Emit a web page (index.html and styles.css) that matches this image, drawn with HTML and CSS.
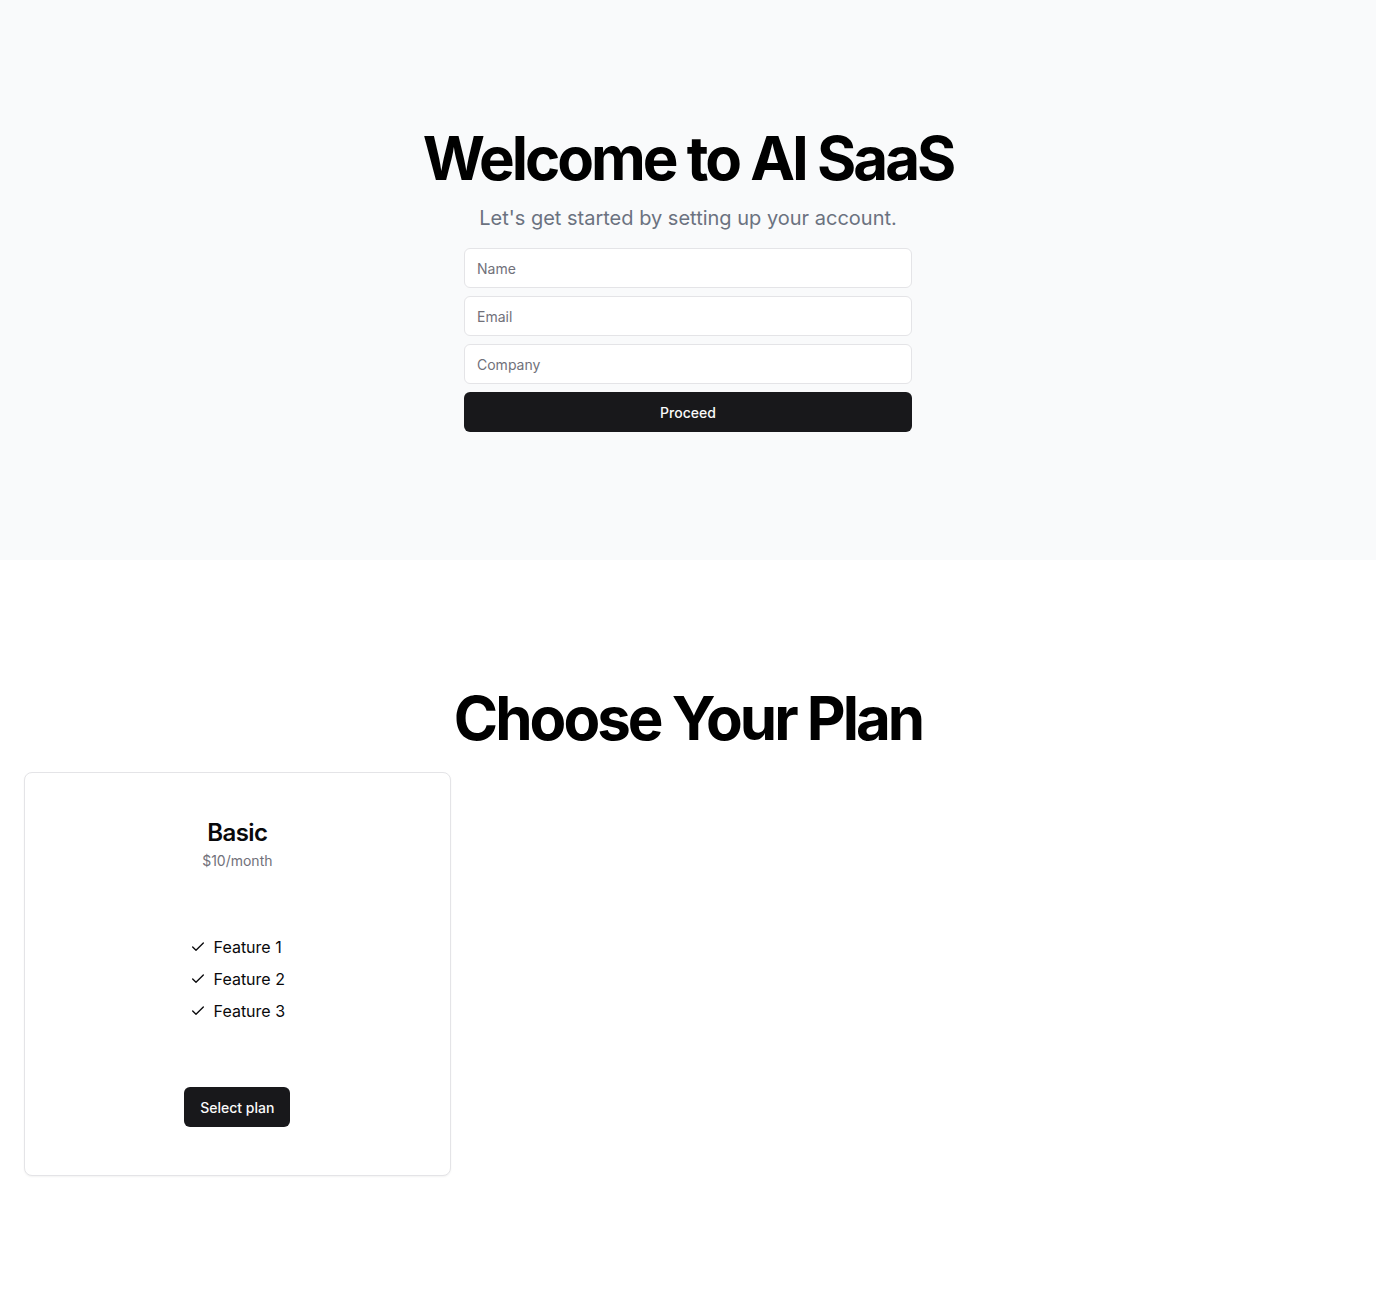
FILE: index.html
```html
<!DOCTYPE html>
<html lang="en">
<head>
<meta charset="utf-8">
<title>AI SaaS</title>
<link rel="stylesheet" href="styles.css">
</head>
<body>
<section class="hero">
  <div class="hero-inner">
    <h1 class="title">Welcome to AI SaaS</h1>
    <p class="subtitle">Let's get started by setting up your account.</p>
    <form class="form">
      <input class="input" type="text" placeholder="Name">
      <input class="input" type="email" placeholder="Email">
      <input class="input" type="text" placeholder="Company">
      <button class="btn btn-full" type="button">Proceed</button>
    </form>
  </div>
</section>
<section class="plans">
  <h2 class="title">Choose Your Plan</h2>
  <div class="grid">
    <div class="card">
      <div class="card-header">
        <h3 class="card-title">Basic</h3>
        <p class="card-desc">$10/month</p>
      </div>
      <div class="card-content">
        <ul class="features">
          <li class="feature"><svg class="check" viewBox="0 0 24 24" fill="none" stroke="currentColor" stroke-width="2" stroke-linecap="round" stroke-linejoin="round"><path d="M20 6 9 17l-5-5"/></svg>Feature 1</li>
          <li class="feature"><svg class="check" viewBox="0 0 24 24" fill="none" stroke="currentColor" stroke-width="2" stroke-linecap="round" stroke-linejoin="round"><path d="M20 6 9 17l-5-5"/></svg>Feature 2</li>
          <li class="feature"><svg class="check" viewBox="0 0 24 24" fill="none" stroke="currentColor" stroke-width="2" stroke-linecap="round" stroke-linejoin="round"><path d="M20 6 9 17l-5-5"/></svg>Feature 3</li>
        </ul>
      </div>
      <div class="card-footer">
        <button class="btn" type="button">Select plan</button>
      </div>
    </div>
  </div>
</section>
</body>
</html>
```

FILE: styles.css
```css
* { box-sizing: border-box; }
html, body { margin: 0; padding: 0; }
body {
  font-family: Inter, "Noto Sans", sans-serif;
  color: #09090b;
  background: #ffffff;
}
.hero {
  background: #f9fafb;
  padding: 128px 24px;
}
.hero-inner {
  display: flex;
  flex-direction: column;
  align-items: center;
  text-align: center;
}
.title {
  margin: 0;
  font-size: 60px;
  line-height: 60px;
  font-weight: 700;
  letter-spacing: -0.05em;
  color: #000;
  text-align: center;
}
.subtitle {
  margin: 16px 0 0;
  font-size: 20px;
  line-height: 28px;
  color: #6b7280;
}
.form {
  margin-top: 16px;
  width: 448px;
  display: flex;
  flex-direction: column;
  gap: 8px;
}
.input {
  height: 40px;
  width: 100%;
  border: 1px solid #e4e4e7;
  border-radius: 6px;
  background: #fff;
  padding: 8px 12px;
  font-family: inherit;
  font-size: 14px;
  color: #09090b;
  outline: none;
}
.input::placeholder { color: #71717a; }
.btn {
  height: 40px;
  padding: 0 16px;
  border: none;
  border-radius: 6px;
  background: #18181b;
  color: #fafafa;
  font-family: inherit;
  font-size: 14px;
  font-weight: 500;
  cursor: pointer;
}
.btn-full { width: 100%; }
.plans {
  padding: 128px 24px;
}
.grid {
  margin-top: 24px;
  display: grid;
  grid-template-columns: repeat(3, 1fr);
  gap: 24px;
}
.card {
  border: 1px solid #e4e4e7;
  border-radius: 8px;
  background: #fff;
  box-shadow: 0 1px 2px rgba(0,0,0,0.05);
  padding: 24px;
  display: flex;
  flex-direction: column;
  align-items: center;
  text-align: center;
}
.card-header {
  padding: 24px;
  display: flex;
  flex-direction: column;
  gap: 6px;
}
.card-title {
  margin: 0;
  font-size: 24px;
  line-height: 24px;
  font-weight: 600;
  letter-spacing: -0.025em;
}
.card-desc {
  margin: 0;
  font-size: 14px;
  line-height: 20px;
  color: #71717a;
}
.card-content {
  padding: 40px 24px 64px;
}
.features {
  list-style: none;
  margin: 0;
  padding: 0;
  display: flex;
  flex-direction: column;
  gap: 8px;
}
.feature {
  display: flex;
  align-items: center;
  font-size: 16px;
  line-height: 24px;
}
.check {
  width: 16px;
  height: 16px;
  margin-right: 8px;
  flex: none;
}
.card-footer {
  padding: 0 24px 24px;
  display: flex;
  justify-content: center;
}
```
